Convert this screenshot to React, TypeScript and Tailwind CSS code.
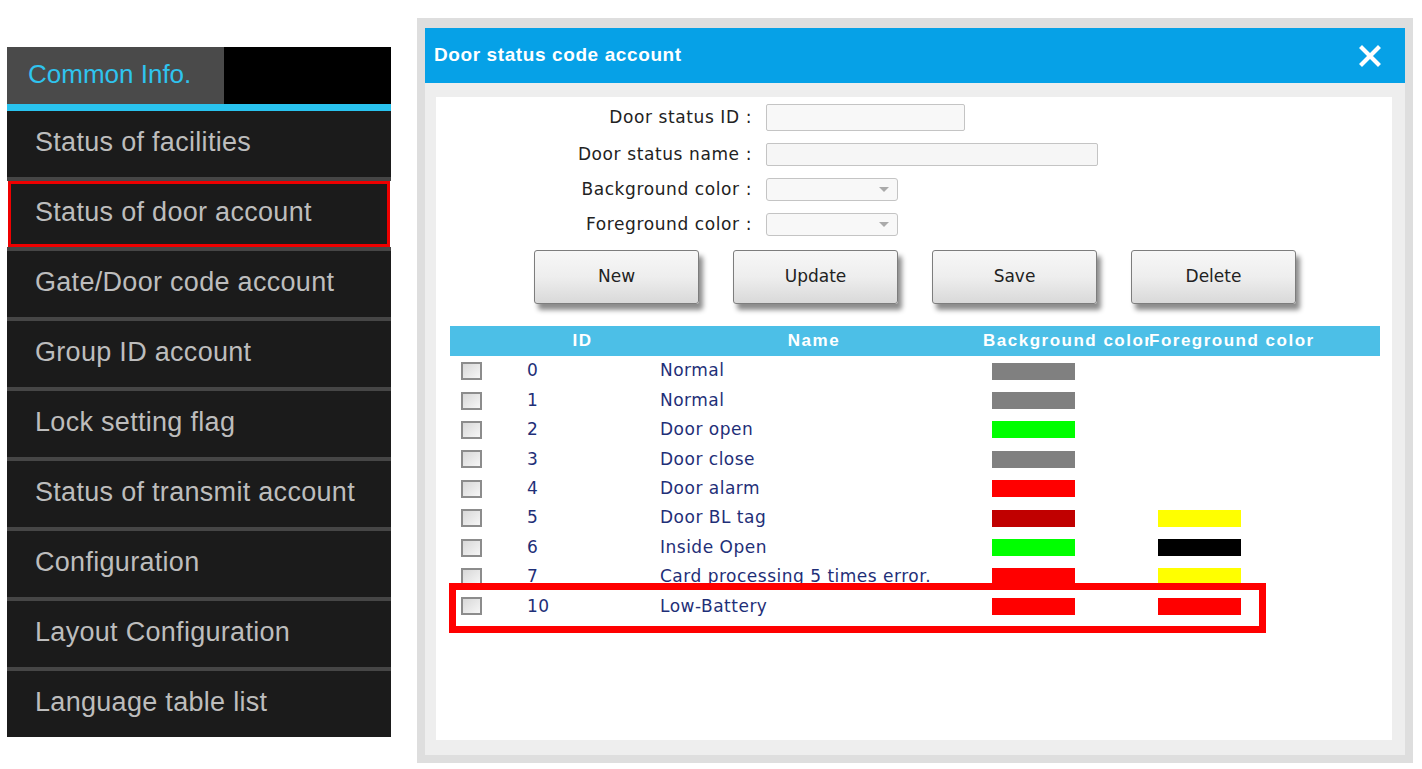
import React from "react";

const menu = [
  "Status of facilities",
  "Status of door account",
  "Gate/Door code account",
  "Group ID account",
  "Lock setting flag",
  "Status of transmit account",
  "Configuration",
  "Layout Configuration",
  "Language table list",
];

type Row = { id: string; name: string; bg: string; fg?: string };

const rows: Row[] = [
  { id: "0", name: "Normal", bg: "bg-[#808080]" },
  { id: "1", name: "Normal", bg: "bg-[#808080]" },
  { id: "2", name: "Door open", bg: "bg-[#00ff00]" },
  { id: "3", name: "Door close", bg: "bg-[#808080]" },
  { id: "4", name: "Door alarm", bg: "bg-[#ff0000]" },
  { id: "5", name: "Door BL tag", bg: "bg-[#c00000]", fg: "bg-[#ffff00]" },
  { id: "6", name: "Inside Open", bg: "bg-[#00ff00]", fg: "bg-[#000000]" },
  { id: "7", name: "Card processing 5 times error.", bg: "bg-[#ff0000]", fg: "bg-[#ffff00]" },
  { id: "10", name: "Low-Battery", bg: "bg-[#ff0000]", fg: "bg-[#ff0000]" },
];

function Sidebar() {
  return (
    <div className="ml-[7px] mt-[47px] w-[384px] flex flex-col font-['Liberation_Sans',sans-serif]">
      <div className="h-[57px] flex bg-black">
        <div className="w-[217px] bg-[#4a4a4a] flex items-center pl-[21px] pb-[3px] text-[26px] text-[#2fc3ee]">
          Common Info.
        </div>
      </div>
      <div className="h-[7px] bg-[#29c3ef]" />
      {menu.map((label, i) => (
        <div key={label} className="flex flex-col">
          {i > 0 && <div className="h-[4px] bg-[#464646]" />}
          <div
            className={
              i === 1
                ? "h-[66px] mx-[1px] border-[3px] border-[#ee0000] bg-[#1b1b1b] flex items-center pl-[24px] pb-[3px] text-[27px] tracking-[0.3px] text-[#bdbdbd]"
                : "h-[66px] bg-[#1b1b1b] flex items-center pl-[28px] pb-[3px] text-[27px] tracking-[0.3px] text-[#bdbdbd]"
            }
          >
            {label}
          </div>
        </div>
      ))}
    </div>
  );
}

function FormRow({ label, children }: { label: string; children: React.ReactNode }) {
  return (
    <div className="flex items-center">
      <div className="w-[330px] pr-[14px] text-right text-[17px] leading-[23px] tracking-[0.6px] text-[#222]">{label}</div>
      {children}
    </div>
  );
}

function Select() {
  return (
    <div className="w-[132px] h-[23px] border border-[#c4c4c4] rounded-[3px] bg-[#f8f8f8] flex items-center justify-end pr-[8px]">
      <div className="w-0 h-0 border-l-[5px] border-r-[5px] border-t-[5px] border-l-transparent border-r-transparent border-t-[#aaaaaa]" />
    </div>
  );
}

function Btn({ label }: { label: string }) {
  return (
    <div className="w-[165px] h-[54px] rounded-[3px] border border-[#7d7d7d] bg-gradient-to-b from-[#f7f7f7] via-[#eeeeee] to-[#d9d9d9] shadow-[4px_6px_5px_rgba(0,0,0,0.45)] flex items-center justify-center text-[17px] text-[#222]">
      {label}
    </div>
  );
}

function Checkbox() {
  return (
    <div className="w-[21px] h-[18px] border-2 border-[#8c8c8c] bg-gradient-to-br from-[#d8d8d8] to-[#f6f6f6]" />
  );
}

function Dialog() {
  return (
    <div className="ml-[26px] mt-[18px] w-[996px] h-[745px] bg-[#dedede] pt-[10px] px-[8px] pb-[8px] flex flex-col font-['DejaVu_Sans',sans-serif]">
      <div className="h-[55px] bg-[#06a1e7] flex items-center justify-between pl-[9px] pr-[24px]">
        <div className="text-white font-bold text-[19px] tracking-[0.6px] font-['Liberation_Sans',sans-serif]">
          Door status code account
        </div>
        <svg width="22" height="22" viewBox="0 0 22 22">
          <path d="M3 3 L19 19 M19 3 L3 19" stroke="white" strokeWidth="4.2" strokeLinecap="square" />
        </svg>
      </div>
      <div className="flex-1 bg-[#eeeeee] pt-[14px] pl-[11px] pr-[13px] pb-[15px] flex">
        <div className="flex-1 bg-white pt-[7px] flex flex-col">
          <div className="flex flex-col gap-[12px]">
            <FormRow label="Door status ID :">
              <div className="w-[199px] h-[27px] border border-[#c4c4c4] rounded-[2px] bg-[#f8f8f8]" />
            </FormRow>
            <FormRow label="Door status name :">
              <div className="w-[332px] h-[23px] border border-[#c4c4c4] rounded-[2px] bg-[#f6f6f6]" />
            </FormRow>
            <FormRow label="Background color :">
              <Select />
            </FormRow>
            <FormRow label="Foreground color :">
              <Select />
            </FormRow>
          </div>
          <div className="mt-[14px] pl-[98px] flex gap-[34px]">
            <Btn label="New" />
            <Btn label="Update" />
            <Btn label="Save" />
            <Btn label="Delete" />
          </div>
          <div className="mt-[22px] ml-[14px] w-[930px] flex flex-col">
            <div className="h-[30px] bg-[#4cbfe7] flex items-center text-white font-bold text-[17px] tracking-[1.5px] font-['Liberation_Sans',sans-serif]">
              <div className="w-[70px]" />
              <div className="w-[125px] text-center">ID</div>
              <div className="w-[338px] text-center">Name</div>
              <div className="w-[166px] overflow-hidden whitespace-nowrap">Background color</div>
              <div className="flex-1 whitespace-nowrap">Foreground color</div>
            </div>
            <div className="relative flex flex-col">
              {rows.map((r) => (
                <div key={r.id} className="h-[29.4px] flex items-center pt-[1px] text-[17px] tracking-[0.5px] text-[#1f2f78]">
                  <div className="w-[70px] pl-[11px]">
                    <Checkbox />
                  </div>
                  <div className="w-[125px] pl-[7px]">{r.id}</div>
                  <div className="w-[338px] pl-[15px] whitespace-nowrap">{r.name}</div>
                  <div className="w-[166px] pl-[9px]">
                    <div className={`w-[83px] h-[17px] ${r.bg}`} />
                  </div>
                  <div className="flex-1 pl-[9px]">
                    {r.fg && <div className={`w-[83px] h-[17px] ${r.fg}`} />}
                  </div>
                </div>
              ))}
              <div className="absolute left-[-1px] top-[227px] w-[817px] h-[50px] border-[7px] border-[#ff0000]" />
            </div>
          </div>
        </div>
      </div>
    </div>
  );
}

export default function App() {
  return (
    <div className="w-[1422px] h-[769px] bg-white flex items-start overflow-hidden">
      <Sidebar />
      <Dialog />
    </div>
  );
}
